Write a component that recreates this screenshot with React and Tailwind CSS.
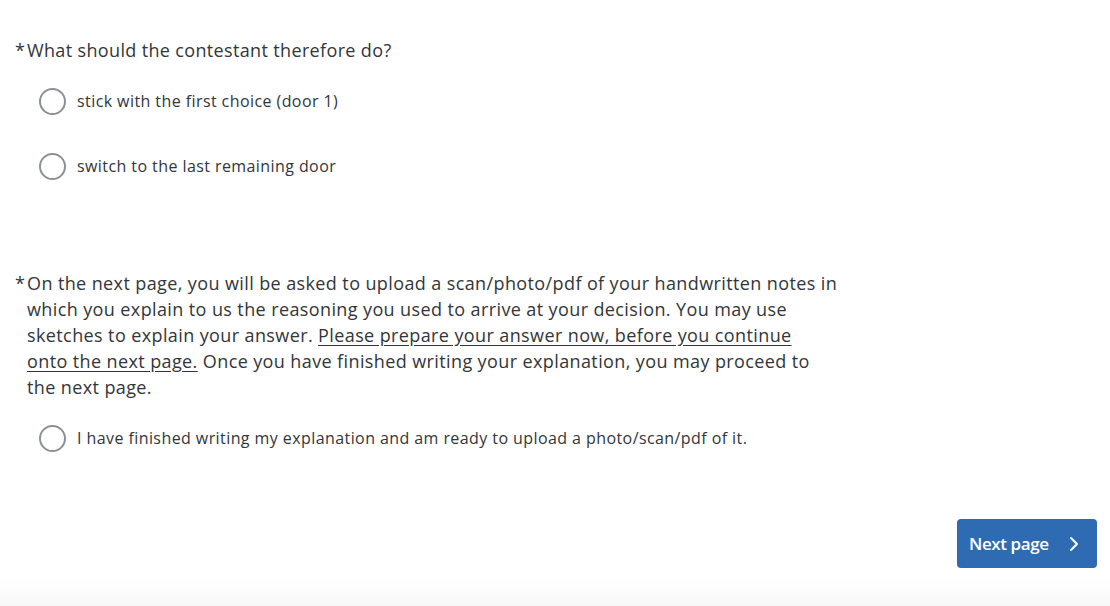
import React, { useState } from 'react';

const font = { fontFamily: '"Open Sans", "Noto Sans", sans-serif' };

function RadioOption({ label, checked, onSelect, className = '' }) {
  return (
    <button
      type="button"
      onClick={onSelect}
      className={`flex items-center h-[48px] pl-[39px] text-left ${className}`}
    >
      <span className="w-[27px] h-[27px] rounded-full border-2 border-[#8b9097] bg-white flex items-center justify-center shrink-0">
        {checked && <span className="w-[13px] h-[13px] rounded-full bg-[#2f6bb3]" />}
      </span>
      <span className="ml-[11px] text-[16px] leading-[22px] tracking-[0.42px] text-[#32363a]">{label}</span>
    </button>
  );
}

export default function App() {
  const [choice, setChoice] = useState(null);
  const [ready, setReady] = useState(false);

  return (
    <div style={font} className="w-[1110px] h-[606px] bg-white flex flex-col overflow-hidden text-[#32363a]">
      {/* Question 1 */}
      <div className="flex pl-[15px] mt-[37px] text-[18px] leading-[26px] tracking-[0.35px]">
        <span className="w-[12px] shrink-0">*</span>
        <span>What should the contestant therefore do?</span>
      </div>
      <RadioOption
        className="mt-[14px]"
        label="stick with the first choice (door 1)"
        checked={choice === 1}
        onSelect={() => setChoice(1)}
      />
      <RadioOption
        className="mt-[17px]"
        label="switch to the last remaining door"
        checked={choice === 2}
        onSelect={() => setChoice(2)}
      />

      {/* Question 2 */}
      <div className="flex pl-[15px] mt-[80px] text-[18px] leading-[26px] tracking-[0.39px]">
        <span className="w-[12px] shrink-0">*</span>
        <p className="w-[860px]">
          On the next page, you will be asked to upload a scan/photo/pdf of your handwritten notes in
          <br />
          which you explain to us the reasoning you used to arrive at your decision. You may use
          <br />
          sketches to explain your answer.{' '}
          <span className="underline underline-offset-[3px]">
            Please prepare your answer now, before you continue
            <br />
            onto the next page.
          </span>{' '}
          Once you have finished writing your explanation, you may proceed to
          <br />
          the next page.
        </p>
      </div>
      <RadioOption
        className="mt-[14px]"
        label="I have finished writing my explanation and am ready to upload a photo/scan/pdf of it."
        checked={ready}
        onSelect={() => setReady(!ready)}
      />

      {/* Navigation */}
      <div className="flex justify-end pr-[13px] mt-[57px]">
        <button
          type="button"
          className="w-[140px] h-[49px] rounded-[4px] bg-[#2f6bb3] text-white flex items-center pl-[12px] text-[17px] tracking-[-0.4px] font-semibold"
        >
          <span>Next page</span>
          <svg className="ml-[20px]" width="10" height="16" viewBox="0 0 10 16" fill="none">
            <path d="M2 2l6 6-6 6" stroke="white" strokeWidth="2" strokeLinecap="round" strokeLinejoin="round" />
          </svg>
        </button>
      </div>

      <div className="mt-auto h-[28px] bg-gradient-to-b from-white to-[#f7f7f7]" />
    </div>
  );
}
